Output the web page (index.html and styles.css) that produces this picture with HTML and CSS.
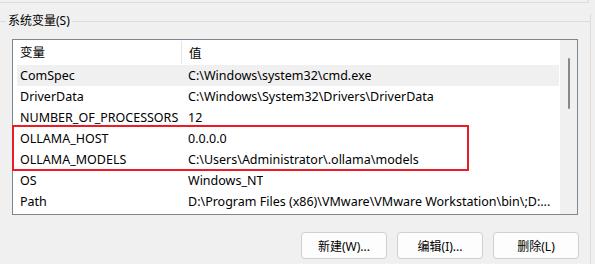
FILE: index.html
```html
<!DOCTYPE html>
<html lang="zh-CN">
<head>
    <meta charset="UTF-8">
    <title>系统变量</title>
    <link rel="stylesheet" href="styles.css">
</head>
<body>
    <div class="prev-group"></div>

    <div class="group">
        <div class="group-title"><span>系统变量(S)</span></div>

        <div class="listbox">
            <div class="list-main">
                <div class="list-head">
                    <div class="col-name">变量</div>
                    <div class="col-value">值</div>
                </div>
                <div class="row hover">
                    <div class="col-name">ComSpec</div>
                    <div class="col-value">C:\Windows\system32\cmd.exe</div>
                </div>
                <div class="row">
                    <div class="col-name">DriverData</div>
                    <div class="col-value">C:\Windows\System32\Drivers\DriverData</div>
                </div>
                <div class="row">
                    <div class="col-name">NUMBER_OF_PROCESSORS</div>
                    <div class="col-value">12</div>
                </div>
                <div class="row">
                    <div class="col-name">OLLAMA_HOST</div>
                    <div class="col-value">0.0.0.0</div>
                </div>
                <div class="row">
                    <div class="col-name">OLLAMA_MODELS</div>
                    <div class="col-value">C:\Users\Administrator\.ollama\models</div>
                </div>
                <div class="row">
                    <div class="col-name">OS</div>
                    <div class="col-value">Windows_NT</div>
                </div>
                <div class="row">
                    <div class="col-name">Path</div>
                    <div class="col-value">D:\Program Files (x86)\VMware\VMware Workstation\bin\;D:...</div>
                </div>
            </div>
            <div class="scrollbar">
                <div class="thumb"></div>
            </div>
            <!-- highlight around the ollama entries -->
            <div class="mark"></div>
        </div>

        <div class="actions">
            <button>新建(W)...</button>
            <button>编辑(I)...</button>
            <button>删除(L)</button>
        </div>
    </div>
</body>
</html>
```

FILE: styles.css
```css
body {
    margin: 0;
    background-color: #f0f0f0;
    font-family: "Noto Sans", "Noto Sans CJK SC", sans-serif;
    font-size: 12px;
    color: #000;
    width: 595px;
    height: 264px;
    overflow: hidden;
}

.prev-group {
    height: 2px;
    margin-right: 6px;
    border-bottom: 1px solid #dcdcdc;
    border-right: 1px solid #dcdcdc;
}

.group {
    margin-top: 11px;
    margin-right: 4px;
    border-right: 1px solid #dcdcdc;
    height: 250px;
}

.group-title {
    display: flex;
    align-items: center;
    height: 14px;
}

.group-title::before {
    content: "";
    width: 6px;
    border-top: 1px solid #dcdcdc;
}

.group-title::after {
    content: "";
    flex: 1;
    border-top: 1px solid #dcdcdc;
}

.group-title span {
    padding: 0 2px;
    line-height: 14px;
}

.listbox {
    position: relative;
    display: flex;
    margin: 11px 12px 0 12px;
    height: 174px;
    border: 1px solid #7a8793;
    background-color: #fff;
}

.list-main {
    flex: 1;
    padding: 0 1px 0 4px;
    overflow: hidden;
    font-size: 12.5px;
}

.list-head,
.row {
    display: flex;
    align-items: center;
    white-space: nowrap;
}

.list-head {
    height: 25px;
}

.row {
    height: 21px;
}

.row.hover {
    background-color: #f0f0f0;
}

.col-name {
    width: 161px;
    padding-left: 3px;
    flex-shrink: 0;
}

.list-head .col-name {
    height: 23px;
    line-height: 23px;
    border-right: 1px solid #e5e5e5;
}

.col-value {
    padding-left: 7px;
    overflow: hidden;
}

.scrollbar {
    width: 17px;
    background-color: #f0f0f0;
    display: flex;
    justify-content: center;
}

.thumb {
    width: 2px;
    height: 51px;
    margin-top: 18px;
    margin-left: 1px;
    background-color: #898989;
    border-radius: 1px;
}

.mark {
    position: absolute;
    left: -1px;
    top: 85px;
    width: 453px;
    height: 42px;
    border: 2px solid #ec1c24;
}

.actions {
    display: flex;
    justify-content: flex-end;
    gap: 10px;
    margin: 17px 11px 0 0;
}

button {
    width: 86px;
    height: 27px;
    padding: 0;
    font-family: inherit;
    font-size: 12px;
    color: #000;
    background-color: #fdfdfd;
    border: 1px solid #d0d0d0;
    border-radius: 4px;
}
```
